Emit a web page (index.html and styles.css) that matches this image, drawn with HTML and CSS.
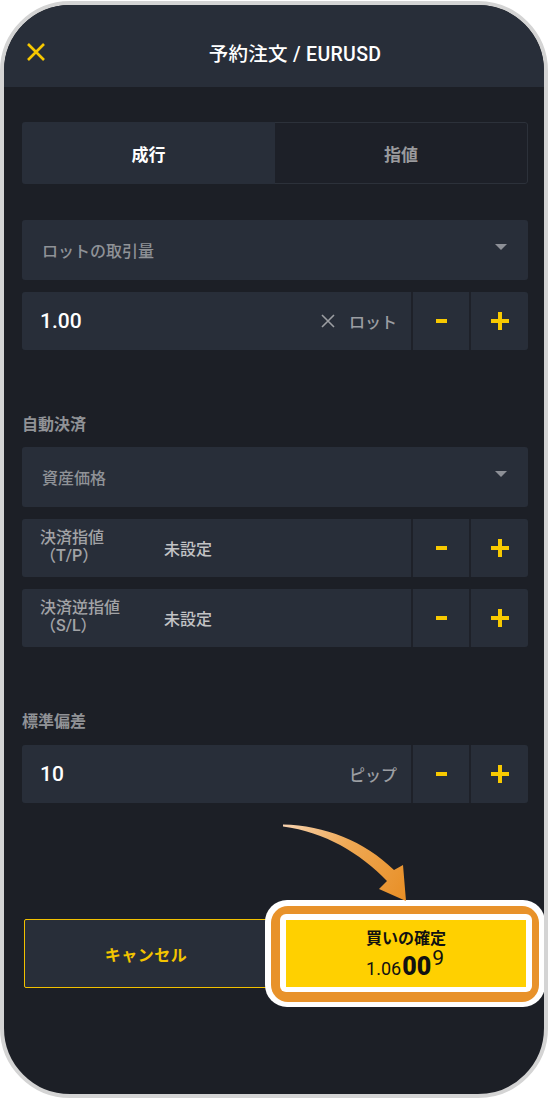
FILE: index.html
```html
<!DOCTYPE html>
<html lang="ja">
<head>
<meta charset="utf-8">
<title>予約注文 / EURUSD</title>
<link rel="stylesheet" href="styles.css">
</head>
<body>
<div class="phone">
  <header class="header">
    <svg class="close" width="20" height="20" viewBox="0 0 20 20" aria-hidden="true">
      <path d="M2 2 L18 18 M18 2 L2 18" stroke="#f7c800" stroke-width="2.6" stroke-linecap="butt" fill="none"/>
    </svg>
    <h1 class="title">予約注文 / EURUSD</h1>
  </header>

  <main class="content">
    <div class="tabs">
      <div class="tab tab-active">成行</div>
      <div class="tab">指値</div>
    </div>

    <div class="select select-first">
      <span class="select-text">ロットの取引量</span>
      <span class="caret"></span>
    </div>

    <div class="stepper">
      <div class="field">
        <span class="value">1.00</span>
        <span class="unit">
          <svg class="unit-x" width="14" height="14" viewBox="0 0 14 14" aria-hidden="true">
            <path d="M1 1 L13 13 M13 1 L1 13" stroke="#9c9ea2" stroke-width="1.6" fill="none"/>
          </svg>
          ロット
        </span>
      </div>
      <div class="step"><span class="minus"></span></div>
      <div class="step"><span class="plus"></span></div>
    </div>

    <div class="section-label label-auto">自動決済</div>

    <div class="select">
      <span class="select-text">資産価格</span>
      <span class="caret"></span>
    </div>

    <div class="stepper">
      <div class="field">
        <span class="two-line">決済指値<br>（T/P）</span>
        <span class="unset">未設定</span>
      </div>
      <div class="step"><span class="minus"></span></div>
      <div class="step"><span class="plus"></span></div>
    </div>

    <div class="stepper">
      <div class="field">
        <span class="two-line">決済逆指値<br>（S/L）</span>
        <span class="unset">未設定</span>
      </div>
      <div class="step"><span class="minus"></span></div>
      <div class="step"><span class="plus"></span></div>
    </div>

    <div class="section-label label-dev">標準偏差</div>

    <div class="stepper stepper-tight">
      <div class="field">
        <span class="value">10</span>
        <span class="unit">ピップ</span>
      </div>
      <div class="step"><span class="minus"></span></div>
      <div class="step"><span class="plus"></span></div>
    </div>

    <div class="actions">
      <div class="btn-cancel">キャンセル</div>
      <div class="btn-buy">
        <div class="highlight"><div class="hl-orange"><div class="hl-inner"></div></div></div>
        <div class="buy-face">
          <span class="buy-title">買いの確定</span>
          <span class="buy-price"><span class="p-small">1.06</span><span class="p-big">00</span><span class="p-sup">9</span></span>
        </div>
      </div>
    </div>
  </main>

  <svg class="arrow" width="140" height="95" viewBox="275 815 140 95" aria-hidden="true">
    <defs>
      <linearGradient id="ag" x1="283" y1="825" x2="405" y2="900" gradientUnits="userSpaceOnUse">
        <stop offset="0" stop-color="#f7d3b0"/>
        <stop offset="0.45" stop-color="#efa955"/>
        <stop offset="1" stop-color="#e88f26"/>
      </linearGradient>
    </defs>
    <path d="M283 824.5 C325 825.5 364 841 394 870 L403 865 L406 901 L379 889 L387 881 C360 853 325 832 283 826.5 Z" fill="url(#ag)"/>
  </svg>
</div>
</body>
</html>
```

FILE: styles.css
```css
* { box-sizing: border-box; }

html, body {
  margin: 0;
  padding: 0;
  background: #ffffff;
}

body {
  font-family: Roboto, "Noto Sans CJK JP", sans-serif;
  width: 550px;
  height: 1099px;
  overflow: hidden;
}

.phone {
  position: relative;
  width: 548px;
  height: 1097px;
  margin-top: 1px;
  border: 4px solid #d4d4d4;
  border-radius: 70px;
  background: #1c1f26;
  overflow: hidden;
  display: flex;
  flex-direction: column;
}

/* header */
.header {
  height: 82px;
  padding-top: 12px;
  background: #282e39;
  display: flex;
  align-items: center;
  position: relative;
  flex-shrink: 0;
}

.close {
  margin-left: 22px;
  flex-shrink: 0;
}

.title {
  margin: 0;
  flex: 1;
  text-align: center;
  padding-right: 0;
  font-size: 19.5px;
  font-weight: 500;
  color: #ffffff;
  letter-spacing: 0.3px;
}

/* content */
.content {
  padding: 0 16px 0 18px;
  display: flex;
  flex-direction: column;
}

.tabs {
  margin-top: 35px;
  height: 62px;
  display: grid;
  grid-template-columns: 253px 1fr;
  border-radius: 3px;
  overflow: hidden;
}

.tab {
  display: flex;
  align-items: center;
  justify-content: center;
  font-size: 17px;
  font-weight: 700;
  color: #9a9b9e;
  background: #1d2028;
  border: 1px solid #2c313a;
  border-left: none;
  border-radius: 0 3px 3px 0;
}

.tab-active {
  background: #282e39;
  color: #ffffff;
  border: none;
  border-radius: 0;
}

.select {
  margin-top: 12px;
  height: 60px;
  background: #282e39;
  border-radius: 3px;
  display: flex;
  align-items: center;
  justify-content: space-between;
  padding: 0 21px 0 20px;
}

.select-first {
  margin-top: 36px;
}

.select-text {
  font-size: 16px;
  font-weight: 500;
  color: #8f9297;
}

.caret {
  width: 0;
  height: 0;
  border-left: 6px solid transparent;
  border-right: 6px solid transparent;
  border-top: 6px solid #8d9097;
  margin-top: -6px;
}

.stepper {
  margin-top: 12px;
  height: 58px;
  display: grid;
  grid-template-columns: 1fr 56px 57px;
  column-gap: 2px;
  background: #1e2129;
  border-radius: 3px;
  overflow: hidden;
}

.field {
  background: #282e39;
  display: flex;
  align-items: center;
  padding: 0 14px 0 18px;
}

.value {
  font-size: 21px;
  font-weight: 500;
  color: #ffffff;
  flex: 1;
}

.unit {
  font-size: 16px;
  font-weight: 500;
  color: #9c9ea2;
  display: flex;
  align-items: center;
}

.unit-x {
  margin-right: 14px;
}

.two-line {
  width: 124px;
  font-size: 16px;
  line-height: 18px;
  font-weight: 500;
  color: #a2a3a6;
  margin-top: -2px;
}

.unset {
  font-size: 16px;
  font-weight: 500;
  color: #c2c3c5;
}

.step {
  background: #282e39;
  display: flex;
  align-items: center;
  justify-content: center;
}

.minus {
  display: block;
  width: 11px;
  height: 4px;
  background: #f8c900;
}

.plus {
  display: block;
  position: relative;
  width: 18px;
  height: 18px;
}

.plus::before,
.plus::after {
  content: "";
  position: absolute;
  background: #f8c900;
}

.plus::before {
  left: 0;
  top: 7px;
  width: 18px;
  height: 4px;
}

.plus::after {
  left: 7px;
  top: 0;
  width: 4px;
  height: 18px;
}

.section-label {
  font-size: 16px;
  line-height: 20px;
  font-weight: 700;
  color: #909296;
}

.label-auto {
  margin-top: 65px;
}

.label-dev {
  margin-top: 65px;
}

.label-auto + .select {
  margin-top: 12px;
}

.stepper-tight {
  margin-top: 13px;
}

/* bottom actions */
.actions {
  margin-top: 116px;
  padding: 0 2px;
  display: grid;
  grid-template-columns: 248px 240px;
  column-gap: 14px;
  align-items: center;
}

.btn-cancel {
  height: 69px;
  background: #282e39;
  border: 1.5px solid #f1c000;
  border-radius: 2px;
  display: flex;
  align-items: center;
  justify-content: center;
  font-size: 16px;
  font-weight: 700;
  color: #f3c400;
  padding-right: 4px;
  letter-spacing: 0.5px;
}

.btn-buy {
  position: relative;
  height: 67px;
}

.highlight {
  position: absolute;
  top: -20px;
  bottom: -20px;
  left: -21px;
  right: -19px;
  background: #ffffff;
  border-radius: 22px;
  padding: 6px 6px 5px 6px;
}

.hl-orange {
  width: 100%;
  height: 100%;
  background: #e8922a;
  border-radius: 17px;
  padding: 8px 7px 10px 9px;
}

.hl-inner {
  width: 100%;
  height: 100%;
  background: #ffffff;
  border-radius: 6px;
}

.buy-face {
  position: relative;
  height: 100%;
  background: #ffd000;
  display: flex;
  flex-direction: column;
  align-items: center;
  justify-content: flex-start;
  color: #111111;
  padding-top: 10px;
}

.buy-title {
  font-size: 16px;
  line-height: 18px;
  font-weight: 700;
}

.buy-price {
  margin-top: 8px;
  height: 22px;
  line-height: 22px;
  display: flex;
  align-items: baseline;
  padding-right: 2px;
}

.p-small {
  font-size: 18px;
}

.p-big {
  font-size: 25px;
  font-weight: 900;
  margin-left: 1px;
}

.p-sup {
  align-self: flex-start;
  font-size: 21px;
  line-height: 14px;
  margin-top: -5px;
  margin-left: 1px;
}

.arrow {
  position: absolute;
  left: 271px;
  top: 810px;
}
```
